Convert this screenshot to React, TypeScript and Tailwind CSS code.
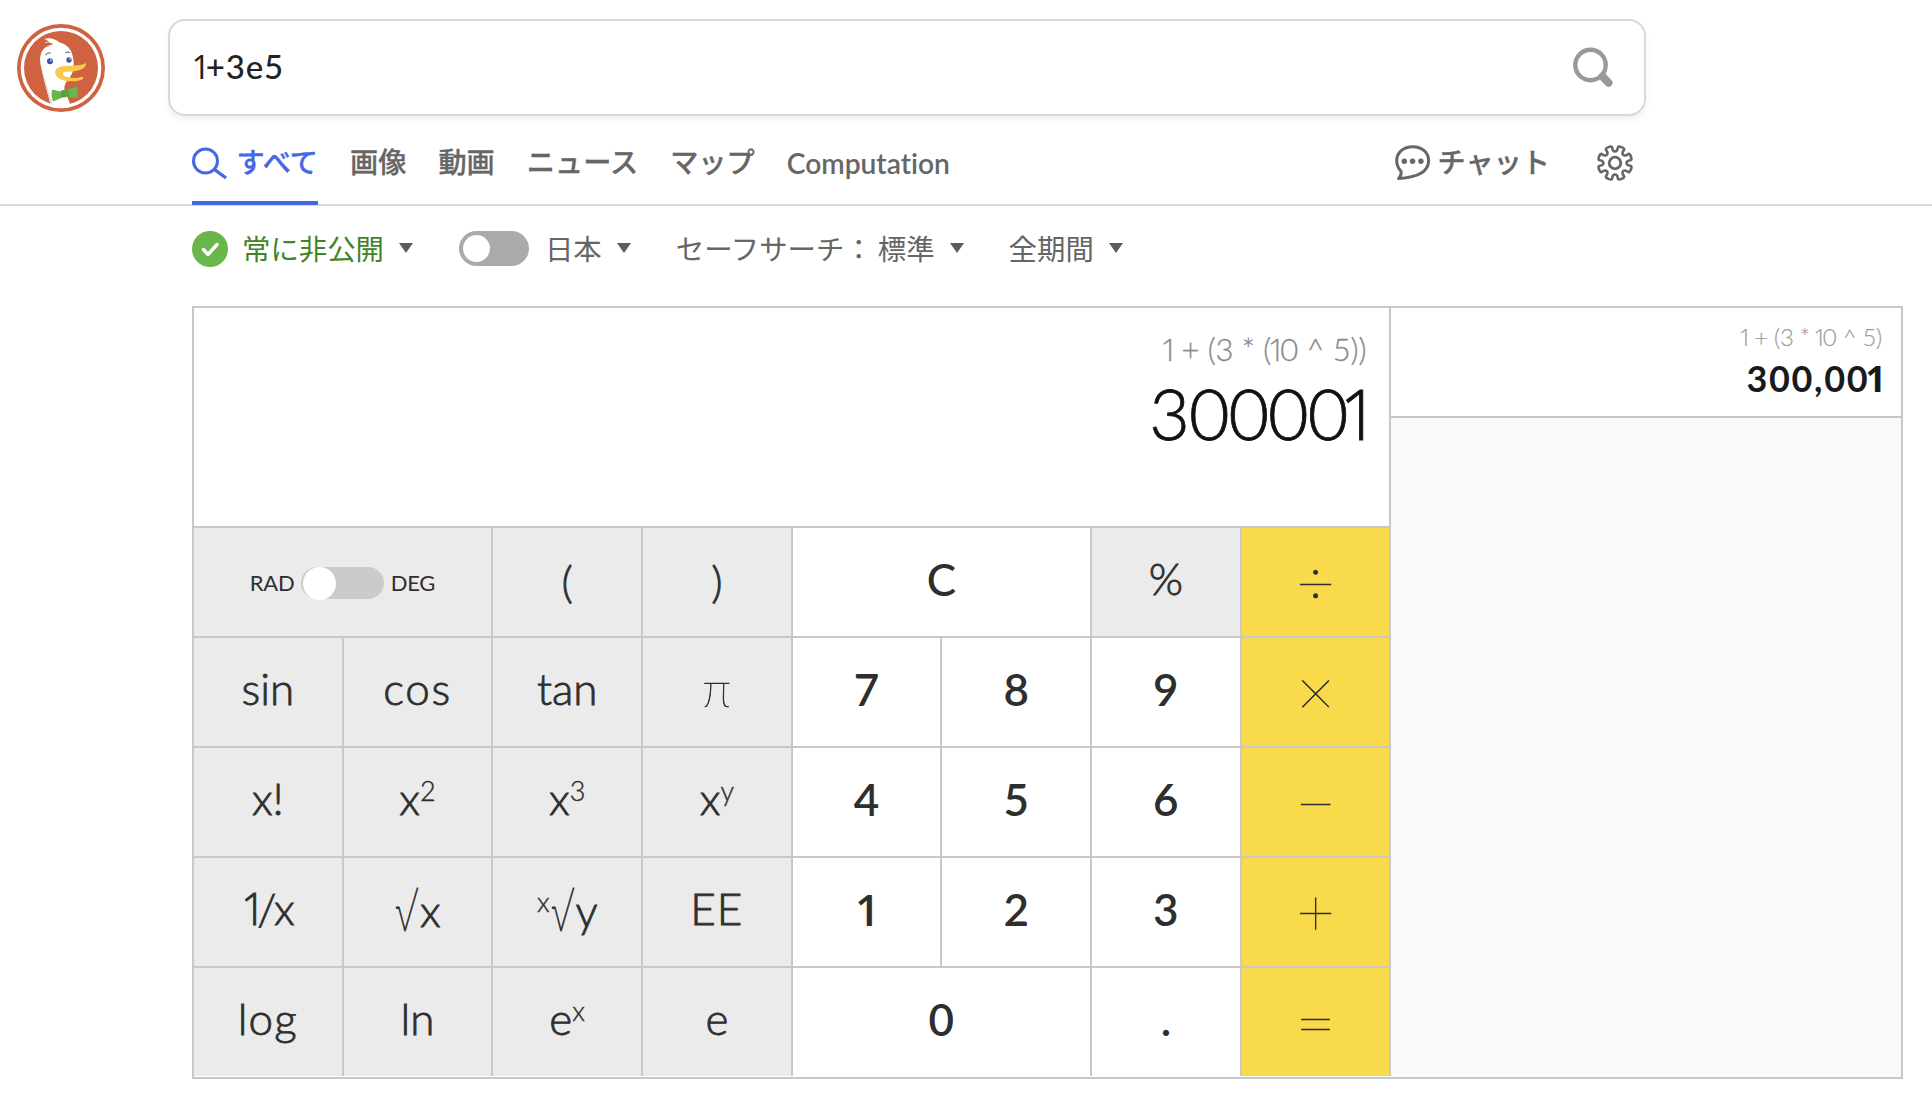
import type { ReactNode } from "react";

function DuckLogo() {
  return (
    <svg className="h-22 w-22 shrink-0" viewBox="21 24 264 264" aria-label="DuckDuckGo">
      <circle cx="153" cy="156" r="132" fill="#cf6240" />
      <circle cx="153" cy="156" r="121" fill="#fff" />
      <circle cx="153" cy="156" r="111" fill="#cf6240" />
      <path
        d="M103 81C108 76 114 77 119 80C113 74 108 71 103 69C118 63 139 70 150 80C168 83 184 98 188 120C191 132 192 147 190 160C186 185 163 195 163 217C163 232 176 247 180 265C160 275 138 274 121 263C115 238 98 180 91 142C88 118 95 97 115 90C121 87 126 86 131 85C122 79 113 79 103 81Z"
        fill="#fff"
      />
      <path d="M91 142C98 180 115 238 121 263L128 266C119 230 100 180 91 142Z" fill="#ddd" />
      <path
        d="M228 141C216 149 201 147 186 149C168 149 145 147 136 164C132 178 147 190 166 194C185 198 209 196 219 188C221 184 219 182 215 183C197 187 177 187 163 179C154 173 159 167 169 167C192 168 222 163 228 148Z"
        fill="#f9ca4e"
      />
      <circle cx="120" cy="136" r="9" fill="#3f569c" />
      <circle cx="123" cy="133" r="2.5" fill="#fff" />
      <circle cx="177" cy="132" r="8" fill="#3f569c" />
      <circle cx="180" cy="129" r="2.2" fill="#fff" />
      <path d="M105 117Q113 108 122 111M166 110Q173 106 180 110" fill="none" stroke="#3f569c" strokeWidth="3" />
      <path
        d="M126 221C136 221 147 228 156 225C165 220 187 220 201 210C204 220 203 236 202 246C190 247 174 240 162 242C151 246 139 254 129 256C124 246 124 230 126 221Z"
        fill="#68b74c"
      />
      <path d="M153 224C160 221 170 221 176 223L176 240C169 245 160 245 154 243Z" fill="#56a33f" />
    </svg>
  );
}

function SmallSearch() {
  return (
    <svg className="h-9 w-9" viewBox="0 0 36 36" fill="none" stroke="#4467e6" strokeWidth="3">
      <circle cx="13.5" cy="16" r="12" />
      <path d="M22.5 24.5L34 33" strokeWidth="3.4" />
    </svg>
  );
}

function BigSearch() {
  return (
    <svg className="mb-0.5 h-11 w-11" viewBox="0 0 44 44" fill="none" stroke="#999" strokeWidth="4.4">
      <circle cx="19.5" cy="20" r="15.2" />
      <path d="M31.5 31.5L37.5 37.8" strokeWidth="8" strokeLinecap="round" />
    </svg>
  );
}

function ChatIcon() {
  return (
    <svg className="h-9 w-9" viewBox="0 0 36 36" fill="none" stroke="#666" strokeWidth="3">
      <path
        d="M17.7 1.7C27 1.7 33.6 7.4 33.6 15.8C33.6 28 19 32.6 3.6 33.6C5.8 30.8 6.6 28.6 6 26.2C3.3 23.4 1.7 19.8 1.7 15.8C1.7 7.4 8.4 1.7 17.7 1.7Z"
        strokeLinejoin="round"
      />
      <g fill="#666" stroke="none">
        <circle cx="9.3" cy="16.2" r="2.7" />
        <circle cx="17.6" cy="16.2" r="2.7" />
        <circle cx="25.9" cy="16.2" r="2.7" />
      </g>
    </svg>
  );
}

// Outline of an eight-toothed gear, rounded by curving through edge midpoints.
function gearPath() {
  const pts: [number, number][] = [];
  for (let i = 0; i < 8; i++) {
    const steps: [number, number][] = [
      [-17, 11.6],
      [-11.5, 13.6],
      [-12.5, 17.6],
      [12.5, 17.6],
      [11.5, 13.6],
      [17, 11.6],
    ];
    for (const [deg, r] of steps) {
      const a = ((i * 45 + 22.5 + deg) * Math.PI) / 180;
      pts.push([18 + r * Math.cos(a), 18 + r * Math.sin(a)]);
    }
  }
  const mid = (i: number) => {
    const a = pts[i % pts.length];
    const b = pts[(i + 1) % pts.length];
    return `${((a[0] + b[0]) / 2).toFixed(2)} ${((a[1] + b[1]) / 2).toFixed(2)}`;
  };
  let d = `M${mid(pts.length - 1)}`;
  pts.forEach((p, i) => {
    d += `Q${p[0].toFixed(2)} ${p[1].toFixed(2)} ${mid(i)}`;
  });
  return d + "Z";
}

function Gear() {
  return (
    <svg className="h-9 w-9" viewBox="0 0 36 36" fill="none" stroke="#666" strokeWidth="2.6">
      <path d={gearPath()} />
      <circle cx="18" cy="18" r="5.8" strokeWidth="2.8" />
    </svg>
  );
}

function Caret() {
  return (
    <svg className="mb-0.5 ml-[15px] h-2.5 w-3.5" viewBox="0 0 14 10">
      <path d="M0 0H14L7 10Z" fill="#5c5c5c" />
    </svg>
  );
}

// Sets the digit one in a narrow form without a foot serif.
function Num({ text }: { text: string }) {
  return (
    <span className="whitespace-pre">
      {text.split(/(1)/).map((part, i) =>
        part === "1" ? (
          <span key={i} className="-ml-[0.11em] -mr-[0.16em] font-['Open_Sans',sans-serif]">1</span>
        ) : (
          part
        ),
      )}
    </span>
  );
}

const light = "font-light text-[44px] [-webkit-text-stroke:0.8px_#2e2e2e]";
const thin = "font-thin [-webkit-text-stroke:0.7px_#2e2e2e]";

function Sup({ children }: { children: ReactNode }) {
  return <span className="relative -top-[8px] text-[27px] leading-none [-webkit-text-stroke:0.4px_#2e2e2e]">{children}</span>;
}

function Root() {
  return (
    <span className={`inline-block origin-bottom translate-y-[6px] scale-x-[0.85] scale-y-[1.35] font-['Inter',sans-serif] ${thin}`}>√</span>
  );
}

function Key({ children, tone = "fn", wide = false, last = false }: { children: ReactNode; tone?: "fn" | "num" | "op"; wide?: boolean; last?: boolean }) {
  const tones = {
    fn: `bg-[#ebebeb] pb-2 ${light}`,
    num: "bg-white pb-1.5 text-[44px] font-semibold",
    op: `bg-[#f8da4b] pb-0.5 text-[66px] ${thin}`,
  };
  return (
    <div
      className={`flex items-center justify-center whitespace-pre border-r-2 border-[#c8c8c8] leading-none ${tones[tone]} ${wide ? "col-span-2" : ""} ${last ? "h-[108px]" : "h-[110px] border-b-2"}`}
    >
      {children}
    </div>
  );
}

function Calculator() {
  return (
    <div className="ml-48 mt-[44px] flex h-[773px] w-[1711px] border-2 border-[#c8c8c8]">
      <div className="w-[1197.4px] shrink-0">
        <div className="flex h-[220px] flex-col items-end border-b-2 border-r-2 border-[#c8c8c8] pr-[23px] pt-[22px]">
          <div className="text-[31px] font-light leading-[38px] tracking-[-0.1px] text-[#8a8a8a] [-webkit-text-stroke:0.3px_#8a8a8a]">
            <Num text="1 + (3 * (10 ^ 5))" />
          </div>
          <div className="-mr-[1px] mt-[7px] text-[70px] font-light leading-[76px] tracking-[-1px] text-[#111] [-webkit-text-stroke:0.8px_#111]">
            <Num text="300001" />
          </div>
        </div>
        <div className="grid grid-cols-8 text-[#2e2e2e]">
          <Key wide>
            <div className="flex items-center pt-2.5 text-[22px] font-normal [-webkit-text-stroke:0px]">
              <span className="w-[44px] tracking-[-0.2px]">RAD</span>
              <span className="mx-[7px] flex h-[32px] w-[83px] items-center rounded-full bg-[#cbcbcb] pl-0.5">
                <span className="h-[33px] w-[33px] rounded-full bg-white" />
              </span>
              <span className="w-[45px] tracking-[-0.2px]">DEG</span>
            </div>
          </Key>
          <Key><span className="pt-1.5">(</span></Key>
          <Key><span className="pt-1.5">)</span></Key>
          <Key tone="num" wide><span className="font-medium">C</span></Key>
          <Key>%</Key>
          <Key tone="op">÷</Key>

          <Key>sin</Key>
          <Key><span className="tracking-[1.6px]">cos</span></Key>
          <Key>tan</Key>
          <Key><span className={`text-[50px] ${thin}`}>π</span></Key>
          <Key tone="num">7</Key>
          <Key tone="num">8</Key>
          <Key tone="num">9</Key>
          <Key tone="op">×</Key>

          <Key>x!</Key>
          <Key>x<Sup>2</Sup></Key>
          <Key>x<Sup>3</Sup></Key>
          <Key>x<Sup>y</Sup></Key>
          <Key tone="num">4</Key>
          <Key tone="num">5</Key>
          <Key tone="num">6</Key>
          <Key tone="op"><span className="text-[72px]">−</span></Key>

          <Key><span className="-mr-[3px] tracking-[-2px]"><Num text="1/x" /></span></Key>
          <Key><span className="pt-1"><Root />x</span></Key>
          <Key>
            <span className="pt-1">
              <span className="relative -top-[15px] text-[27px] [-webkit-text-stroke:0.4px_#2e2e2e]">x</span>
              <Root />y
            </span>
          </Key>
          <Key><span className="tracking-[1px]">EE</span></Key>
          <Key tone="num"><Num text="1" /></Key>
          <Key tone="num">2</Key>
          <Key tone="num">3</Key>
          <Key tone="op">+</Key>

          <Key last><span className="tracking-[1.2px]">log</span></Key>
          <Key last>ln</Key>
          <Key last>e<Sup>x</Sup></Key>
          <Key last>e</Key>
          <Key last wide tone="num">0</Key>
          <Key last tone="num">.</Key>
          <Key last tone="op"><span className="text-[70px]">=</span></Key>
        </div>
      </div>
      <div className="flex-1 bg-[#f9f9f9]">
        <div className="flex h-[110px] flex-col items-end border-b-2 border-[#c8c8c8] bg-white pr-[19px] pt-3.5">
          <div className="text-[24px] font-light leading-[30px] tracking-[-0.3px] text-[#a0a0a0] [-webkit-text-stroke:0.2px_#a0a0a0]">
            <Num text="1 + (3 * 10 ^ 5)" />
          </div>
          <div className="mt-[5px] text-[36px] font-bold leading-[42px] tracking-[1.7px] text-[#1a1a1a]">
            <Num text="300,001" />
          </div>
        </div>
      </div>
    </div>
  );
}

export default function App() {
  return (
    <div className="h-[1108px] w-[1932px] overflow-hidden bg-white font-['Lato','Noto_Sans_CJK_JP',sans-serif] [font-variant-ligatures:none]">
      <header className="flex pl-[17px] pt-[19px]">
        <div className="pt-[5px]"><DuckLogo /></div>
        <div className="ml-[63px] flex h-[97px] w-[1478px] items-center justify-between rounded-[17px] border-2 border-[#d9d9d9] pl-[25px] pr-[29px] shadow-[0_4px_6px_rgba(0,0,0,0.06)]">
          <span className="pb-0.5 text-[33px] font-medium tracking-[0.8px] text-[#222]"><Num text="1+3e5" /></span>
          <BigSearch />
        </div>
      </header>

      <nav className="flex h-[90px] items-center justify-between border-b-2 border-[#d9d9d9] pl-48 pr-[299px] font-['Noto_Sans_CJK_JP',sans-serif] text-[28.2px] font-medium leading-none text-[#666] [-webkit-text-stroke:0.3px_currentColor]">
        <div className="flex h-[90px] items-center gap-8">
          <div className="flex h-[90px] w-[126px] items-center justify-between border-b-4 border-[#4467e6] pt-2.5 text-[#4467e6]">
            <SmallSearch />
            <span className="-ml-1 -mt-1">すべて</span>
          </div>
          <span className="pt-0.5">画像</span>
          <span className="pt-0.5">動画</span>
          <span className="pt-0.5">ニュース</span>
          <span className="pt-0.5">マップ</span>
          <span className="pt-1.5 font-['Lato',sans-serif] font-semibold [-webkit-text-stroke:0px]">Computation</span>
        </div>
        <div className="flex items-center pt-1.5">
          <ChatIcon />
          <span className="-mt-1 ml-[7px]">チャット</span>
          <span className="ml-[47px]"><Gear /></span>
        </div>
      </nav>

      <div className="flex h-14 items-end pl-48 font-['Noto_Sans_CJK_JP',sans-serif] text-[28.4px] leading-none text-[#666]">
        <div className="flex h-[27px] items-center">
          <svg className="h-9 w-9" viewBox="0 0 36 36">
            <circle cx="18" cy="18" r="18" fill="#69b64d" />
            <path d="M11.5 18.5L16 23.5L25 13.5" fill="none" stroke="#fff" strokeWidth="3.4" strokeLinecap="round" strokeLinejoin="round" />
          </svg>
          <span className="-mt-px ml-3.5 text-[#3f8527]">常に非公開</span>
          <Caret />
          <span className="ml-[46px] flex h-[35px] w-[70px] items-center rounded-full bg-[#aaa] pl-1">
            <span className="h-[27px] w-[27px] rounded-full bg-white" />
          </span>
          <span className="-mt-px ml-4">日本</span>
          <Caret />
          <span className="-mt-px ml-[45px]">セーフサーチ：</span>
          <span className="-mt-px ml-[5px]">標準</span>
          <Caret />
          <span className="-mt-px ml-[45px]">全期間</span>
          <Caret />
        </div>
      </div>
      <Calculator />
    </div>
  );
}
